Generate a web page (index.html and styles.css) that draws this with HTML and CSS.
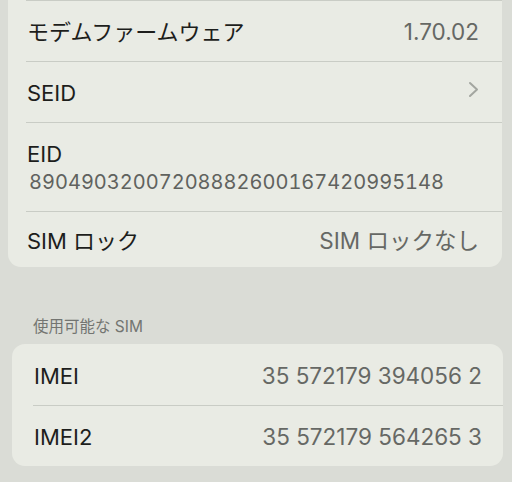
FILE: index.html
```html
<!DOCTYPE html>
<html lang="ja">
<head>
    <meta charset="UTF-8">
    <title>情報</title>
    <link rel="stylesheet" href="styles.css">
</head>
<body>
    <div id="screen">
        <div class="group group-top">
            <div class="row">
                <span class="label">モデムファームウェア</span>
                <span class="value">1.70.02</span>
            </div>
            <div class="row">
                <span class="label">SEID</span>
                <svg class="chevron" width="11" height="17" viewBox="0 0 11 17">
                    <path d="M2 2 L9 8.5 L2 15" fill="none" stroke="#a3a6a0" stroke-width="2" stroke-linecap="round" stroke-linejoin="round"/>
                </svg>
            </div>
            <div class="row row-stack">
                <span class="label">EID</span>
                <span class="eid">89049032007208882600167420995148</span>
            </div>
            <div class="row row-last">
                <span class="label">SIM ロック</span>
                <span class="value">SIM ロックなし</span>
            </div>
        </div>

        <div class="section-title">使用可能な SIM</div>

        <div class="group group-sim">
            <div class="row">
                <span class="label">IMEI</span>
                <span class="value">35 572179 394056 2</span>
            </div>
            <div class="row">
                <span class="label">IMEI2</span>
                <span class="value">35 572179 564265 3</span>
            </div>
        </div>
    </div>
</body>
</html>
```

FILE: styles.css
```css
*{
    margin: 0;
    padding: 0;
    box-sizing: border-box;
}
body{
    background: #dadcd6;
    font-family: Inter, "Noto Sans CJK JP", sans-serif;
    color: #1d1e1c;
}
#screen{
    width: 512px;
    height: 482px;
    overflow: hidden;
}
.group{
    background: #e9ebe4;
    border-radius: 13px;
    padding-left: 18px;
}
.group-top{
    margin: 0 10px 0 8px;
    border-radius: 0 0 13px 13px;
}
.group-sim{
    margin: 0 9px 0 12px;
    padding-left: 21px;
}
.row{
    display: flex;
    align-items: center;
    justify-content: space-between;
    height: 61px;
    padding-right: 23px;
    padding-top: 2px;
    border-top: 1px solid #c9ccc5;
}
.group-sim .row:first-child{
    border-top: 0;
}
.group-sim .row{
    padding-right: 21px;
}
.row-stack{
    flex-direction: column;
    align-items: flex-start;
    justify-content: flex-start;
    height: 89px;
    padding-top: 18px;
}
.row-last{
    height: 56px;
    padding-top: 3px;
}
.label{
    font-size: 22px;
    line-height: 26px;
    padding-left: 1px;
}
.value{
    font-size: 22.5px;
    line-height: 26px;
    color: #666864;
}
.chevron{
    margin: 0 0 8px;
}
.eid{
    font-size: 20px;
    line-height: 26px;
    color: #60625e;
    padding-left: 3px;
    padding-top: 2px;
    font-variant-numeric: tabular-nums;
}
.section-title{
    padding: 50px 0 7px 33px;
    font-size: 15.5px;
    line-height: 20px;
    color: #737571;
}
```
